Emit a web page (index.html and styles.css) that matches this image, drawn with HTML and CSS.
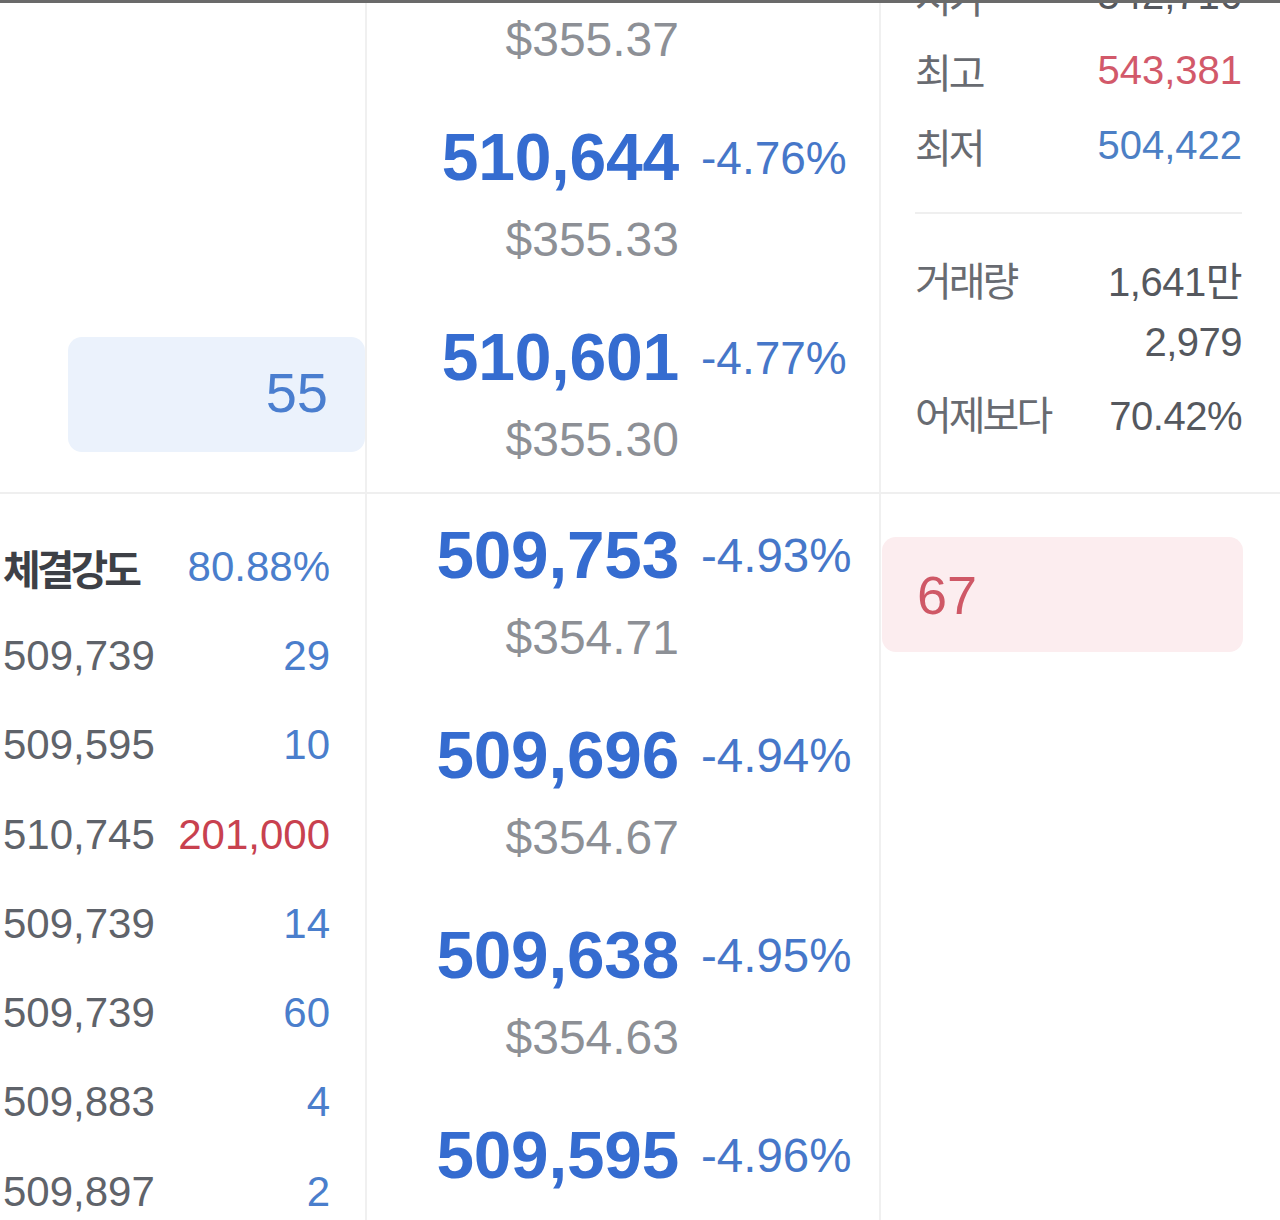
FILE: index.html
```html
<!DOCTYPE html>
<html lang="ko">
<head>
<meta charset="utf-8">
<title>호가</title>
<link rel="stylesheet" href="styles.css">
</head>
<body>
<div class="topbar"></div>
<div class="page">
  <section class="sec upper">
    <div class="col left">
      <div class="qty-box ask"><span>55</span></div>
    </div>
    <div class="col mid">
      <div class="rows">
        <div class="prow partial"><span class="usd">$355.37</span></div>
        <div class="prow"><span class="price">510,644</span><span class="pct">-4.76%</span><span class="usd">$355.33</span></div>
        <div class="prow"><span class="price">510,601</span><span class="pct">-4.77%</span><span class="usd">$355.30</span></div>
      </div>
    </div>
    <div class="col right">
      <div class="info">
        <div class="irow cut"><span class="lbl">시가</span><span class="val">542,716</span></div>
        <div class="irow"><span class="lbl">최고</span><span class="val red">543,381</span></div>
        <div class="irow"><span class="lbl">최저</span><span class="val blue">504,422</span></div>
        <div class="divider"></div>
        <div class="vol">
          <span class="lbl">거래량</span>
          <span class="val">1,641만<br>2,979</span>
        </div>
        <div class="vol last">
          <span class="lbl">어제보다</span>
          <span class="val">70.42%</span>
        </div>
      </div>
    </div>
  </section>
  <section class="sec lower">
    <div class="col left">
      <ul class="trades">
        <li class="head"><span class="tl">체결강도</span><span class="tv blue">80.88%</span></li>
        <li><span class="tl">509,739</span><span class="tv blue">29</span></li>
        <li><span class="tl">509,595</span><span class="tv blue">10</span></li>
        <li><span class="tl">510,745</span><span class="tv red">201,000</span></li>
        <li><span class="tl">509,739</span><span class="tv blue">14</span></li>
        <li><span class="tl">509,739</span><span class="tv blue">60</span></li>
        <li><span class="tl">509,883</span><span class="tv blue">4</span></li>
        <li><span class="tl">509,897</span><span class="tv blue">2</span></li>
      </ul>
    </div>
    <div class="col mid">
      <div class="rows">
        <div class="prow"><span class="price">509,753</span><span class="pct">-4.93%</span><span class="usd">$354.71</span></div>
        <div class="prow"><span class="price">509,696</span><span class="pct">-4.94%</span><span class="usd">$354.67</span></div>
        <div class="prow"><span class="price">509,638</span><span class="pct">-4.95%</span><span class="usd">$354.63</span></div>
        <div class="prow"><span class="price">509,595</span><span class="pct">-4.96%</span></div>
      </div>
    </div>
    <div class="col right">
      <div class="qty-box bid"><span>67</span></div>
    </div>
  </section>
</div>
</body>
</html>
```

FILE: styles.css
```css
* { box-sizing: border-box; }
html, body { margin: 0; padding: 0; }
body {
  width: 1280px;
  height: 1220px;
  overflow: hidden;
  background: #ffffff;
  font-family: "Liberation Sans", "Noto Sans CJK KR", sans-serif;
  color: #5d6168;
}
.topbar {
  height: 3px;
  background: #6a6a6a;
}
.page {
  display: flex;
  flex-direction: column;
}
.sec {
  display: grid;
  grid-template-columns: 365px 2px 512px 2px 399px;
  overflow: hidden;
}
.sec .left { grid-column: 1; }
.sec .mid { grid-column: 3; }
.sec .right { grid-column: 5; }
.sec::before,
.sec::after {
  content: "";
  background: #f0f0f0;
  grid-row: 1;
}
.sec::before { grid-column: 2; }
.sec::after { grid-column: 4; }
.upper {
  height: 491px;
  border-bottom: 2px solid #efefef;
}
.lower {
  height: 726px;
}
.col { overflow: hidden; min-width: 0; }

/* middle price ladder */
.rows {
  display: flex;
  flex-direction: column;
}
.prow {
  height: 200px;
  padding: 21px 0 26px 44px;
  display: grid;
  grid-template-columns: 240px 150px;
  grid-template-rows: 80px 60px;
  row-gap: 13px;
  column-gap: 22px;
  justify-content: center;
  align-items: center;
}
.lower .prow {
  grid-template-columns: 246px 156px;
}
.prow.partial { margin-top: -107px; }
.price {
  grid-column: 1;
  grid-row: 1;
  font-size: 66px;
  font-weight: 700;
  color: #356cd0;
  justify-self: end;
  line-height: 80px;
  letter-spacing: -0.2px;
}
.lower .price { font-size: 67.5px; }
.pct {
  grid-column: 2;
  grid-row: 1;
  font-size: 46px;
  color: #4677c9;
  line-height: 80px;
  padding-top: 2px;
}
.lower .pct { font-size: 47.5px; }
.usd {
  grid-column: 1;
  grid-row: 2;
  justify-self: end;
  font-size: 48px;
  color: #8d9096;
  line-height: 60px;
}

/* quantity boxes */
.qty-box {
  height: 115px;
  border-radius: 14px;
  display: flex;
  align-items: center;
  font-size: 56px;
}
.qty-box.ask {
  margin: 334px 0 0 68px;
  background: #ebf2fc;
  color: #4a7ecf;
  justify-content: flex-end;
  padding: 0 37px 4px 0;
}
.qty-box.bid {
  margin: 43px 37px 0 1px;
  background: #fcedef;
  color: #cf5866;
  padding-left: 35px;
  font-size: 54px;
}

/* right info */
.info {
  padding: 0 38px 0 34px;
  margin-top: -45px;
}
.irow {
  height: 75px;
  display: flex;
  justify-content: space-between;
  align-items: center;
}
.lbl {
  font-size: 40px;
  letter-spacing: -3px;
  color: #686b71;
}
.val {
  font-size: 40px;
  color: #55585e;
  text-align: right;
}
.val.red { color: #d2596a; }
.val.blue { color: #4c7fc5; }
.divider {
  height: 2px;
  background: #efefef;
  margin: 29px 0 38px;
}
.vol {
  display: flex;
  justify-content: space-between;
  align-items: flex-start;
  line-height: 60px;
}
.vol .val { letter-spacing: -0.5px; }
.vol.last { margin-top: 14px; }

/* left trades list */
.trades {
  list-style: none;
  margin: 0;
  padding: 28px 35px 0 3px;
}
.trades li {
  height: 89.3px;
  display: flex;
  justify-content: space-between;
  align-items: center;
  font-size: 42px;
  color: #5f636a;
}
.trades .head .tl {
  font-weight: 700;
  font-size: 41px;
  letter-spacing: -4px;
  color: #3d4046;
}
.tv.blue { color: #4a7ecc; }
.tv.red { color: #c8414f; }
```
